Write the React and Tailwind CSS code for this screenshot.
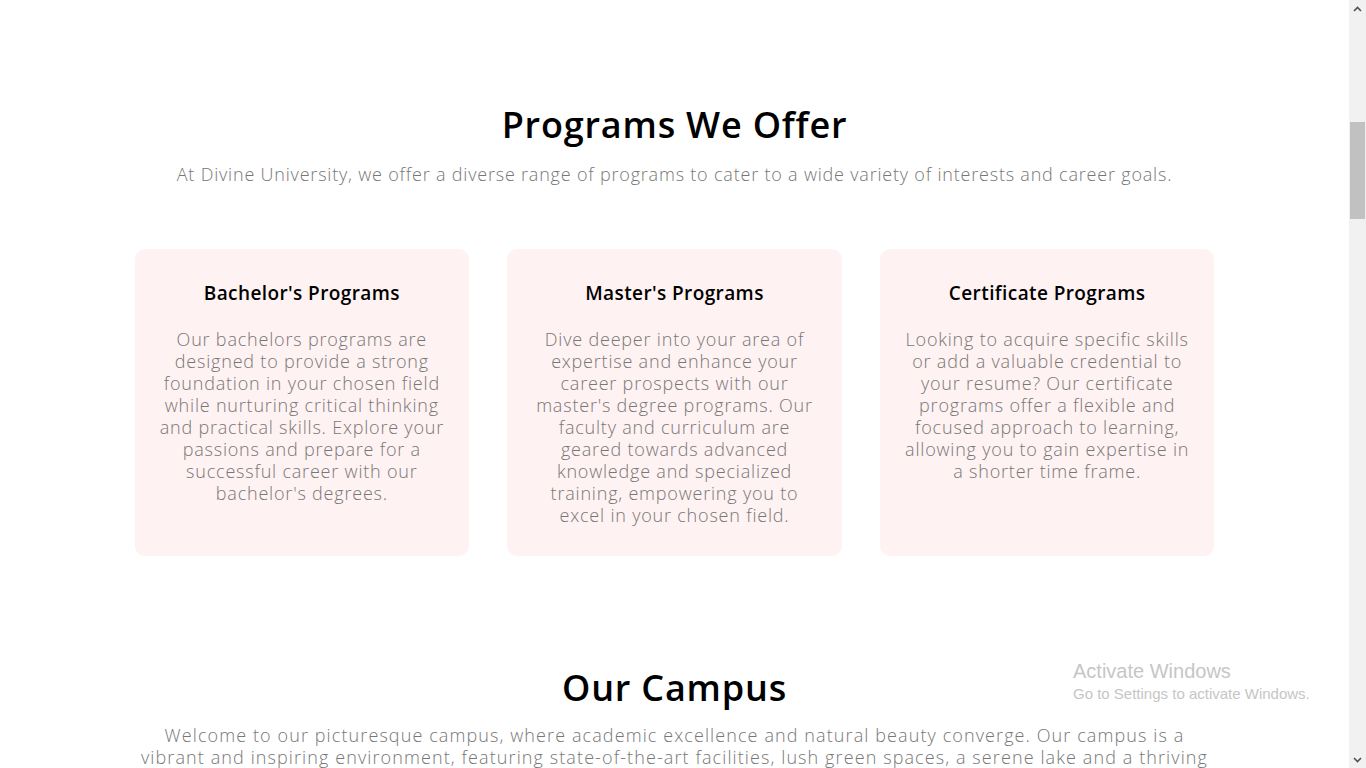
import React from 'react';

const programs = [
  {
    title: "Bachelor's Programs",
    text: "Our bachelors programs are designed to provide a strong foundation in your chosen field while nurturing critical thinking and practical skills. Explore your passions and prepare for a successful career with our bachelor's degrees.",
  },
  {
    title: "Master's Programs",
    text: "Dive deeper into your area of expertise and enhance your career prospects with our master's degree programs. Our faculty and curriculum are geared towards advanced knowledge and specialized training, empowering you to excel in your chosen field.",
  },
  {
    title: 'Certificate Programs',
    text: 'Looking to acquire specific skills or add a valuable credential to your resume? Our certificate programs offer a flexible and focused approach to learning, allowing you to gain expertise in a shorter time frame.',
  },
];

const font = "font-['Open_Sans','Liberation_Sans',sans-serif]";

const ScrollBar = () => (
  <aside className="flex w-[17px] shrink-0 flex-col bg-[#f1f1f1]">
    <div className="flex h-[17px] items-center justify-center text-[#505050]">
      <svg width="9" height="6" viewBox="0 0 9 6"><path d="M1 5 L4.5 1.5 L8 5" stroke="currentColor" strokeWidth="1.6" fill="none" /></svg>
    </div>
    <div className="mt-[105px] mx-[1px] h-[97px] bg-[#c1c1c1]" />
    <div className="flex-1" />
    <div className="flex h-[17px] items-center justify-center text-[#505050]">
      <svg width="9" height="6" viewBox="0 0 9 6"><path d="M1 1 L4.5 4.5 L8 1" stroke="currentColor" strokeWidth="1.6" fill="none" /></svg>
    </div>
  </aside>
);

export default function App() {
  return (
    <div className={`relative flex h-screen w-full overflow-hidden bg-white ${font}`}>
      <main className="flex-1 overflow-hidden">
        <section className="mx-auto w-[1080px] pt-[98px] text-center">
          <h2 className="text-[36px] font-semibold leading-[54px] tracking-[0.8px] text-black">Programs We Offer</h2>
          <p className="mt-[8px] text-[18px] font-light leading-[28px] tracking-[0.8px] text-[#777]">
            At Divine University, we offer a diverse range of programs to cater to a wide variety of interests and career goals.
          </p>

          <div className="mt-[61px] grid grid-cols-3 gap-[38px]">
            {programs.map((p) => (
              <div key={p.title} className="rounded-[10px] bg-[#fff2f2] px-[22px] pt-[30px] pb-[30px]">
                <h3 className="text-[19px] font-semibold leading-[28px] tracking-[0.4px] text-black">{p.title}</h3>
                <p className="mt-[21px] text-[18px] font-light leading-[22px] tracking-[0.8px] text-[#777]">{p.text}</p>
              </div>
            ))}
          </div>
        </section>

        <section className="mx-auto w-[1080px] pt-[105px] text-center">
          <h2 className="text-[36px] font-semibold leading-[54px] tracking-[0.8px] text-black">Our Campus</h2>
          <p className="mx-auto mt-[9px] w-[1075px] text-[18px] font-light leading-[22px] tracking-[1.1px] text-[#777]">
            Welcome to our picturesque campus, where academic excellence and natural beauty converge. Our campus is a vibrant and inspiring environment, featuring state-of-the-art facilities, lush green spaces, a serene lake and a thriving community of students and faculty.
          </p>
        </section>
      </main>
      <ScrollBar />

      <div className="pointer-events-none absolute left-[1073px] top-[658px] font-['Liberation_Sans',sans-serif] text-[#c6c6c6]">
        <div className="text-[20px] leading-[26px]">Activate Windows</div>
        <div className="text-[15px] leading-[20px]">Go to Settings to activate Windows.</div>
      </div>
    </div>
  );
}
